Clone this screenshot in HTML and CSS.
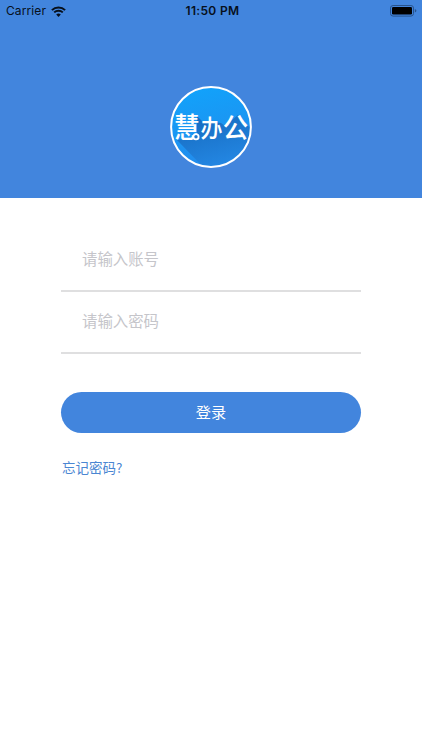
FILE: index.html
```html
<!DOCTYPE html>
<html lang="zh-CN">
<head>
    <meta charset="UTF-8">
    <meta name="viewport" content="width=device-width, initial-scale=1.0">
    <title>登录 - 慧办公</title>
    <link rel="stylesheet" href="styles.css">
</head>
<body>
    <div class="header">
        <div class="status-bar">
            <div class="carrier">
                <span>Carrier</span>
                <svg class="wifi" viewBox="0 0 15 11">
                    <path d="M0.9 4.1 A9.4 9.4 0 0 1 14.1 4.1"/>
                    <path d="M3.2 6.4 A6.2 6.2 0 0 1 11.8 6.4"/>
                    <path class="wifi-dot" d="M7.5 10.9 L5.2 8.5 A3.3 3.3 0 0 1 9.8 8.5 Z"/>
                </svg>
            </div>
            <div class="time">11:50 PM</div>
            <div class="battery-wrap">
                <svg class="battery" viewBox="0 0 27 12">
                    <rect class="battery-case" x="0.5" y="0.5" width="23" height="10.6" rx="2.6"/>
                    <rect x="2" y="2" width="20" height="7.6" rx="1.3"/>
                    <path class="battery-cap" d="M24.8 4 Q26.4 4.6 26.4 5.8 Q26.4 7 24.8 7.6 Z"/>
                </svg>
            </div>
        </div>
        <svg class="logo" viewBox="0 0 82 82">
            <defs>
                <linearGradient id="logoBg" x1="0" y1="0" x2="0.25" y2="1">
                    <stop offset="0" stop-color="#10a4fc"/>
                    <stop offset="1" stop-color="#228cec"/>
                </linearGradient>
                <linearGradient id="logoShadow" x1="0" y1="0" x2="0.4" y2="1">
                    <stop offset="0" stop-color="#1568bb"/>
                    <stop offset="1" stop-color="#2386e2"/>
                </linearGradient>
                <clipPath id="logoClip">
                    <circle cx="41" cy="41" r="39.5"/>
                </clipPath>
            </defs>
            <circle cx="41" cy="41" r="39.5" fill="url(#logoBg)"/>
            <!-- long shadow under the name -->
            <g clip-path="url(#logoClip)">
                <path fill="url(#logoShadow)" d="M27 30 L32 35 L51 37 L55 40 L68 29 L82 44 L82 82 L34 82 L7 54 L27 51 Z"/>
            </g>
            <circle class="logo-ring" cx="41" cy="41" r="39.9"/>
            <g class="logo-text">
                <text transform="translate(4 51.6) scale(1 1.09)" font-size="26">慧</text>
                <text transform="translate(30.4 50.6) scale(1 1.08)" font-size="22">办</text>
                <text transform="translate(52.8 51.8) scale(1.02 1.1)" font-size="25">公</text>
            </g>
            <circle class="logo-dot" cx="26" cy="50.8" r="2.6"/>
        </svg>
    </div>

    <form class="login-form">
        <input class="field" type="text" placeholder="请输入账号">
        <input class="field" type="password" placeholder="请输入密码">
        <button class="login-btn" type="button">登录</button>
        <a class="forgot" href="#">忘记密码?</a>
    </form>
</body>
</html>
```
FILE: styles.css
```css
* {
    box-sizing: border-box;
}

body {
    font-family: Inter, 'Noto Sans CJK SC', sans-serif;
    margin: 0;
    min-height: 750px;
    background: #fff;
}

.header {
    height: 197.5px;
    background-color: #4285dd;
}

.status-bar {
    display: grid;
    grid-template-columns: 1fr auto 1fr;
    align-items: center;
    height: 22px;
    padding: 0 5px 0 6px;
    font-size: 12px;
    color: #07101c;
}

.carrier {
    display: flex;
    align-items: center;
    gap: 5px;
    letter-spacing: 0.1px;
}

.carrier span,
.time {
    padding-bottom: 1px;
}

.wifi {
    width: 15px;
    height: 11px;
    fill: none;
    stroke: #07101c;
    stroke-width: 2;
}

.wifi .wifi-dot {
    fill: #07101c;
    stroke: none;
}

.time {
    padding-left: 2px;
    font-weight: 600;
    letter-spacing: 0.35px;
}

.battery-wrap {
    display: flex;
    justify-content: flex-end;
}

.battery {
    width: 27px;
    height: 12px;
}

.battery-case {
    fill: none;
    stroke: #28538c;
}

.battery-cap {
    fill: #28538c;
}

.logo {
    display: block;
    width: 82px;
    height: 82px;
    margin: 63.5px auto 0;
}

.logo-ring {
    fill: none;
    stroke: #fff;
    stroke-width: 2;
}

.logo-text {
    font-family: 'Noto Sans CJK SC', sans-serif;
    font-weight: 500;
    fill: #fff;
}

.logo-dot {
    fill: #1c78d0;
    stroke: #fff;
    stroke-width: 1.8;
}

.login-form {
    display: flex;
    flex-direction: column;
    width: 300px;
    margin: 32.5px auto 0;
}

.field {
    height: 62px;
    padding: 0 21px 4px;
    border: none;
    border-bottom: 2px solid #dfdfe0;
    border-radius: 0;
    outline: none;
    background: transparent;
    font-family: 'Noto Sans CJK SC', sans-serif;
    font-size: 15.4px;
    color: #333;
}

.field::placeholder {
    color: #c5c5ca;
    opacity: 1;
}

.login-btn {
    height: 41px;
    margin-top: 38px;
    padding: 0 0 3px;
    border: none;
    border-radius: 21px;
    background-color: #4285dd;
    font-family: 'Noto Sans CJK SC', sans-serif;
    font-size: 15.2px;
    color: #fff;
    cursor: pointer;
}

.forgot {
    align-self: flex-start;
    margin-top: 24px;
    padding-left: 1px;
    font-family: 'Noto Sans CJK SC', sans-serif;
    font-size: 13.5px;
    line-height: 20px;
    color: #4a86d2;
    text-decoration: none;
}
```
